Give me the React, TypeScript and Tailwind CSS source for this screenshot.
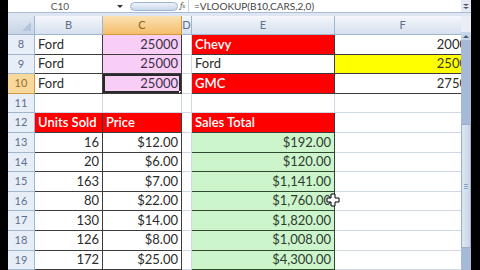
import * as React from "react"

type Cell = { t?: string; cls: string }

const grid = "grid grid-cols-[27px_68px_79px_10px_143px_136px]"
const base =
  "flex h-full items-center overflow-hidden whitespace-nowrap px-[3px] border-r border-b"
const gl = "border-[#d0d7e5] bg-white"
const dk = "border-[#3c3c3c]"

const plain: Cell = { cls: gl }

const ford = (t: string): Cell => ({ t, cls: `${dk} bg-white text-[#2b2b2b]` })
const pink = (t: string): Cell => ({ t, cls: `${dk} justify-end bg-[#f8cdf6] text-[#3a3046]` })
const red = (t: string): Cell => ({ t, cls: `${dk} bg-[#ff0000] font-semibold text-white` })
const num = (t: string): Cell => ({ t, cls: `${dk} justify-end bg-white text-[#2b2b2b]` })
const green = (t: string): Cell => ({ t, cls: `border-[#2f4a2f] justify-end bg-[#ccf5cc] text-[#2e3b2e]` })

const rows: { n: string; cells: Cell[] }[] = [
  {
    n: "8",
    cells: [ford("Ford"), pink("25000"), plain, red("Chevy"), { t: "2000", cls: `${dk} justify-end bg-white text-[#2b2b2b]` }],
  },
  {
    n: "9",
    cells: [ford("Ford"), pink("25000"), plain, ford("Ford"), { t: "2500", cls: `${dk} justify-end bg-[#ffff00] text-[#3a3a1a]` }],
  },
  {
    n: "10",
    cells: [ford("Ford"), pink("25000"), plain, red("GMC"), { t: "2750", cls: `${dk} justify-end bg-white text-[#2b2b2b]` }],
  },
  { n: "11", cells: [plain, plain, plain, plain, plain] },
  { n: "12", cells: [red("Units Sold"), red("Price"), plain, red("Sales Total"), plain] },
  { n: "13", cells: [num("16"), num("$12.00"), plain, green("$192.00"), plain] },
  { n: "14", cells: [num("20"), num("$6.00"), plain, green("$120.00"), plain] },
  { n: "15", cells: [num("163"), num("$7.00"), plain, green("$1,141.00"), plain] },
  { n: "16", cells: [num("80"), num("$22.00"), plain, green("$1,760.00"), plain] },
  { n: "17", cells: [num("130"), num("$14.00"), plain, green("$1,820.00"), plain] },
  { n: "18", cells: [num("126"), num("$8.00"), plain, green("$1,008.00"), plain] },
  { n: "19", cells: [num("172"), num("$25.00"), plain, green("$4,300.00"), plain] },
]

function FormulaBar() {
  return (
    <div className="flex h-[13px] shrink-0 items-center border-b border-[#a9bcd6] bg-white text-[10px] text-[#555]">
      <div className="flex w-[104px] shrink-0 justify-center">C10</div>
      <div className="flex w-[16px] shrink-0 justify-center">
        <div className="h-0 w-0 border-x-[3px] border-t-[3px] border-x-transparent border-t-[#333]" />
      </div>
      <div className="ml-[2px] h-[9px] w-[48px] shrink-0 rounded-full border border-[#9fb4d0] bg-gradient-to-b from-[#eef3fa] to-[#c9d8ec]" />
      <div className="ml-[2px] w-[8px] shrink-0 font-serif text-[9px] italic text-[#555]">
        f<span className="text-[6px]">x</span>
      </div>
      <div className="flex h-full w-[273px] shrink-0 items-center border-l border-[#c9d3e2] pl-[5px] text-[#444]">
        =VLOOKUP(B10,CARS,2,0)
      </div>
      <div className="flex h-full w-[10px] shrink-0 flex-col items-center justify-center gap-[1px] bg-[#e3eaf4]">
        <div className="h-0 w-0 border-x-[3px] border-t-[2px] border-x-transparent border-t-[#556]" />
        <div className="h-0 w-0 border-x-[3px] border-t-[2px] border-x-transparent border-t-[#556]" />
      </div>
    </div>
  )
}

function Header() {
  const h =
    "flex h-full items-center justify-center border-r border-b border-[#9eb6ce] bg-gradient-to-b from-[#f4f7fb] to-[#d6e0ee] text-[11px] text-[#5d6f8c]"
  return (
    <div className={`${grid} h-[19px] shrink-0`}>
      <div className="relative border-r border-b border-[#9eb6ce] bg-gradient-to-b from-[#dfe7f2] to-[#c7d4e6]">
        <div className="absolute right-[3px] bottom-[3px] h-0 w-0 border-b-[9px] border-l-[9px] border-b-[#b4c6dc] border-l-transparent" />
      </div>
      <div className={h}>B</div>
      <div className="flex h-full items-center justify-center border-r border-b border-[#d39a3c] bg-gradient-to-b from-[#fbe2b2] to-[#f4bd6c] text-[11px] text-[#8a6326]">
        C
      </div>
      <div className={h}>D</div>
      <div className={h}>E</div>
      <div className={h}>F</div>
    </div>
  )
}

function Scrollbar() {
  return (
    <div className="flex w-[10px] shrink-0 flex-col bg-[#e5ecf6]">
      <div className="h-[16px] bg-[#e9eef6]" />
      <div className="flex h-[8px] items-center justify-center bg-[#c8d6ea]">
        <div className="h-0 w-0 border-x-[3px] border-b-[3px] border-x-transparent border-b-[#4a5d7c]" />
      </div>
      <div className="h-[84px] bg-[#a6bad8]" />
      <div className="flex h-[124px] flex-col items-center justify-center border border-[#9aaecb] bg-gradient-to-r from-[#dde6f2] to-[#c9d7ea]">
        <div className="flex flex-col gap-[1px]">
          <div className="h-[1px] w-[4px] bg-[#8ea3c2]" />
          <div className="h-[1px] w-[4px] bg-[#8ea3c2]" />
          <div className="h-[1px] w-[4px] bg-[#8ea3c2]" />
        </div>
      </div>
      <div className="flex-1 bg-[#a6bad8]" />
    </div>
  )
}

export default function App() {
  return (
    <div className="relative flex h-[270px] w-[480px] overflow-hidden bg-black font-['Lato',sans-serif]">
      <div className="w-[8px] shrink-0" />
      <div className="flex w-[463px] shrink-0 flex-col bg-[#dfe8f4]">
        <FormulaBar />
        <div className="h-[3px] shrink-0 bg-[#dde6f2]" />
        <div className="flex flex-1">
          <div className="flex w-[453px] shrink-0 flex-col overflow-hidden">
            <Header />
            {rows.map((r) => (
              <div key={r.n} className={`${grid} h-[19.6px] shrink-0 text-[13px]`}>
                <div
                  className={
                    r.n === "10"
                      ? "flex h-full items-center justify-center border-r border-b border-[#d39a3c] bg-[#f9d89c] text-[11px] text-[#9a6a2a]"
                      : "flex h-full items-center justify-center border-r border-b border-[#9eb6ce] bg-[#e8eef7] text-[11px] text-[#5d6f8c]"
                  }
                >
                  {r.n}
                </div>
                {r.cells.map((c, i) => (
                  <div
                    key={i}
                    className={`${base} ${c.cls} ${
                      r.n === "10" && i === 1 ? "relative shadow-[inset_0_0_0_2px_#2a2a2a]" : ""
                    }`}
                  >
                    {c.t}
                    {r.n === "10" && i === 1 && (
                      <div className="absolute right-[-3px] bottom-[-3px] h-[5px] w-[5px] border border-white bg-[#2a2a2a]" />
                    )}
                  </div>
                ))}
              </div>
            ))}
          </div>
          <Scrollbar />
        </div>
      </div>
      <svg className="absolute left-[326px] top-[193px]" width="14" height="14" viewBox="0 0 14 14">
        <path d="M5 1h4v4h4v4H9v4H5V9H1V5h4z" fill="#fff" stroke="#000" strokeWidth="1" />
      </svg>
    </div>
  )
}
